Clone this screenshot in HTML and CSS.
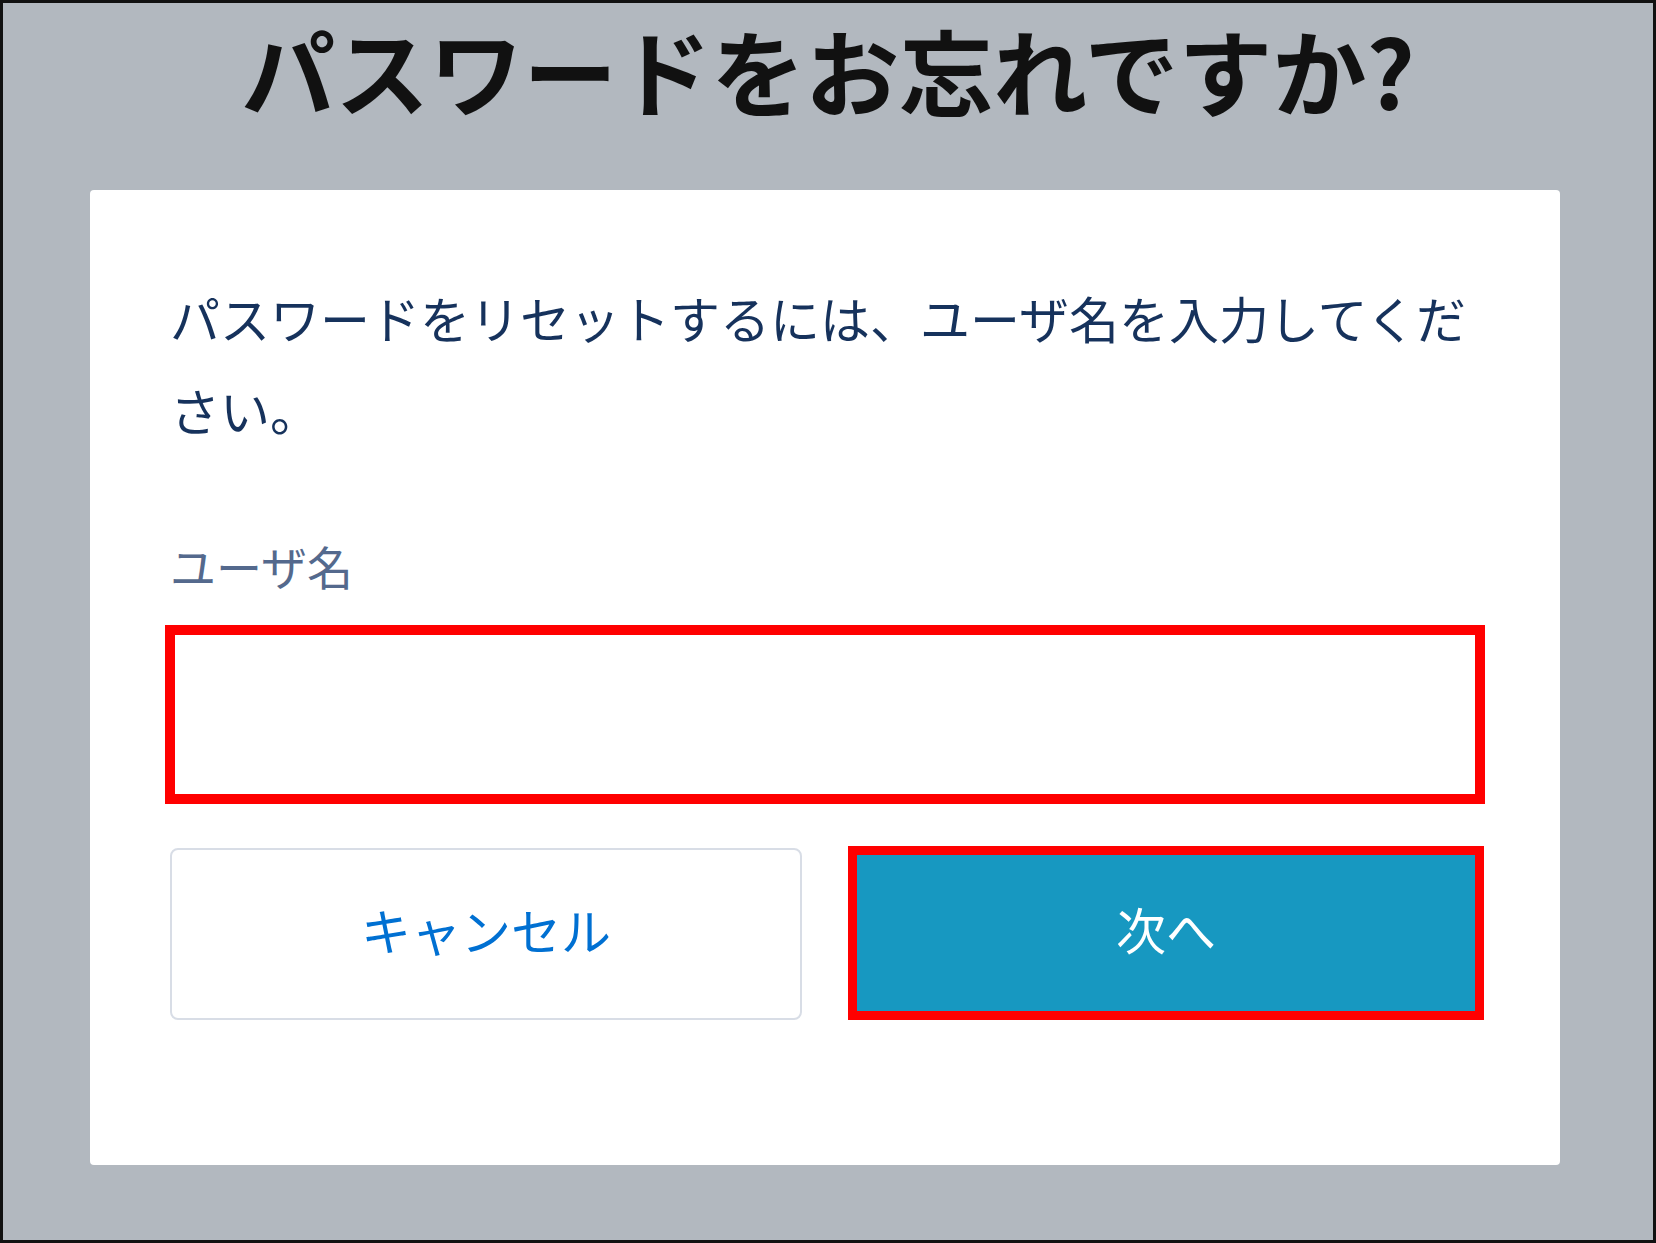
FILE: index.html
```html
<!DOCTYPE html>
<html lang="ja">
<head>
    <meta charset="UTF-8">
    <meta name="viewport" content="width=device-width, initial-scale=1.0">
    <title>パスワードをお忘れですか?</title>
    <link rel="stylesheet" href="styles.css">
</head>
<body>
    <div class="page">
        <h1 class="title">パスワードをお忘れですか?</h1>

        <div class="card">
            <p class="intro">パスワードをリセットするには、ユーザ名を入力してください。</p>

            <form id="forgot-form">
                <label class="field-label" for="username">ユーザ名</label>
                <input class="field-input marked" type="text" id="username" name="username">

                <div class="actions">
                    <button type="button" class="btn btn-cancel">キャンセル</button>
                    <button type="submit" class="btn btn-next marked">次へ</button>
                </div>
            </form>
        </div>
    </div>
</body>
</html>
```

FILE: styles.css
```css
body {
    margin: 0;
    padding: 0;
    font-family: "Noto Sans CJK JP", "Noto Sans", sans-serif;
}

.page {
    box-sizing: border-box;
    width: 1656px;
    height: 1243px;
    border: 3px solid #111;
    background-color: #b2b8bf;
}

.title {
    box-sizing: border-box;
    height: 187px;
    margin: 0;
    padding-top: 0;
    font-size: 94px;
    font-weight: bold;
    line-height: 132px;
    text-align: center;
    color: #111;
}

.card {
    box-sizing: border-box;
    width: 1470px;
    height: 975px;
    margin-left: 87px;
    padding: 81px 80px 0;
    background-color: white;
    border-radius: 4px;
}

.intro {
    margin: 0;
    font-size: 50px;
    line-height: 92px;
    color: #16325c;
}

.field-label {
    display: block;
    margin-top: 76px;
    font-size: 46px;
    line-height: 69px;
    color: #54698d;
}

.field-input {
    display: block;
    box-sizing: border-box;
    width: 100%;
    height: 169px;
    margin-top: 30px;
    border: 2px solid #d8dde6;
    border-top-color: #1589ee;
    border-radius: 0;
    background-color: white;
    box-shadow: 0 0 6px #cfe3f7;
    font-size: 46px;
}

/* cadre rouge d'annotation */
.marked {
    outline: 10px solid #ff0000;
    outline-offset: -5px;
}

.actions {
    display: flex;
    gap: 50px;
    margin-top: 49px;
}

.btn {
    flex: 1;
    height: 172px;
    padding: 0 0 10px;
    font-family: inherit;
    font-size: 50px;
    border-radius: 8px;
    cursor: pointer;
}

.btn-cancel {
    background-color: white;
    color: #0070d2;
    border: 2px solid #d8dde6;
}

.btn-next {
    background-color: #1798c1;
    color: white;
    border: none;
    border-radius: 0;
    outline-width: 9px;
    outline-offset: -5px;
    height: 166px;
    margin-top: 2px;
}
```
